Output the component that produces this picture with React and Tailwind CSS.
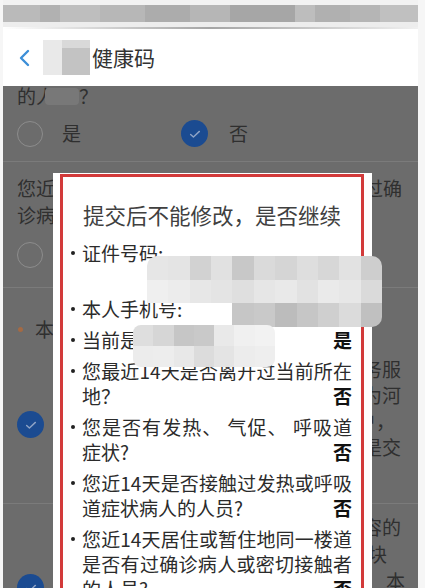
import React from "react";

// Pixelated strips that hide private data in the screenshot
const statusBlocks = [
  "w-[37px] bg-[#bababa]",
  "w-[20px] bg-[#b1b1b1]",
  "w-[40px] bg-[#bebebe]",
  "w-[45px] bg-[#b7b7b7]",
  "w-[45px] bg-[#acacac]",
  "w-[40px] bg-[#b6b6b6]",
  "w-[65px] bg-[#a6a6a6]",
  "w-[20px] bg-[#bdbdbd]",
  "w-[35px] bg-[#b0b0b0]",
  "w-[30px] bg-[#b5b5b5]",
  "w-[38px] bg-[#c0c0c0]",
];

const idBlur = [
  "bg-[#e6e6e6]", "bg-[#e4e4e4]", "bg-[#d2d2d2]", "bg-[#e1e1e1]", "bg-[#c8c8c8]", "bg-[#dadada]",
  "bg-[#d5d5d5]", "bg-[#dedede]", "bg-[#d7d7d7]", "bg-[#e2e2e2]", "bg-[#cecece]",
  "bg-[#efefef]", "bg-[#ececec]", "bg-[#e7e7e7]", "bg-[#e4e4e4]", "bg-[#dfdfdf]", "bg-[#e6e6e6]",
  "bg-[#e9e9e9]", "bg-[#e2e2e2]", "bg-[#eaeaea]", "bg-[#e7e7e7]", "bg-[#dadada]",
  "bg-transparent", "bg-transparent", "bg-transparent", "bg-transparent", "bg-[#c6c6c6]", "bg-[#c9c9c9]",
  "bg-[#bcbcbc]", "bg-[#c6c6c6]", "bg-[#cfcfcf]", "bg-[#dbdbdb]", "bg-[#c0c0c0]",
];

const placeBlur = [
  "bg-[#dedede]", "bg-[#d6d6d6]", "bg-[#c6c6c6]", "bg-[#c9c9c9]", "bg-[#e9e9e9]", "bg-[#f0f0f0]", "bg-[#f2f2f2]",
  "bg-[#ececec]", "bg-[#ededed]", "bg-[#e8e8e8]", "bg-[#dcdcdc]", "bg-[#e4e4e4]", "bg-[#ececec]", "bg-[#eeeeee]",
];

const items = [
  { lines: ["证件号码:", "\u00a0"] },
  { lines: ["本人手机号:"] },
  { lines: ["当前是"], answer: "是" },
  { lines: ["您最近14天是否离开过当前所在", "地？"], answer: "否" },
  { lines: ["您是否有发热、 气促、 呼吸道", "症状?"], answer: "否" },
  { lines: ["您近14天是否接触过发热或呼吸", "道症状病人的人员?"], answer: "否" },
  { lines: ["您近14天居住或暂住地同一楼道", "是否有过确诊病人或密切接触者", "的人员?"], answer: "否" },
];

const Radio = () => (
  <div className="w-[26px] h-[26px] shrink-0 rounded-full border-[1.5px] border-[#8d8d8d]" />
);

const Checked = () => (
  <div className="w-[27px] h-[27px] shrink-0 rounded-full bg-[#1b4b91] flex items-center justify-center">
    <svg className="w-[14px] h-[14px]" viewBox="0 0 16 16" fill="none">
      <path d="M3 8.5l3.2 3L13 5" stroke="#8ea3c6" strokeWidth="1.6" strokeLinecap="round" strokeLinejoin="round" />
    </svg>
  </div>
);

const Item = ({ lines, answer }) => (
  <div className="flex mt-[6px] first:mt-0">
    <div className="w-[12px] h-[25px] flex items-center">
      <div className="w-[4px] h-[4px] ml-[1px] rounded-full bg-[#222]" />
    </div>
    <div className="w-[270px] text-[19px] leading-[25px] text-[#2b2b2b]">
      {lines.map((line, i) =>
        i === lines.length - 1 ? (
          <div key={i} className="flex justify-between whitespace-nowrap">
            <span>{line}</span>
            {answer && <span className="font-bold text-[#111]">{answer}</span>}
          </div>
        ) : (
          <div
            key={i}
            className={line.length > 10 ? "whitespace-nowrap [text-align-last:justify]" : "whitespace-nowrap"}
          >
            {line}
          </div>
        )
      )}
    </div>
  </div>
);

export default function App() {
  return (
    <div className="relative w-[425px] h-[588px] overflow-hidden bg-[#f6f6f6] font-['Noto_Sans_CJK_SC','Noto_Sans',sans-serif]">
      <div className="ml-[3px] w-[415px] h-full flex flex-col">
        {/* Status bar (pixelated) */}
        <div className="h-[5px] shrink-0 bg-[#f2f2f2]" />
        <div className="h-[17px] shrink-0 flex">
          {statusBlocks.map((c, i) => (
            <div key={i} className={c} />
          ))}
        </div>
        <div className="h-[5px] shrink-0 bg-[#ededed]" />
        <div className="h-[2px] shrink-0 bg-gradient-to-r from-white via-[#a5a5a5] to-[#f0f0f0]" />

        {/* Header */}
        <div className="h-[57px] shrink-0 bg-white flex items-center">
          <svg className="ml-[14px] w-[16px] h-[18px]" viewBox="0 0 16 18" fill="none">
            <path d="M11 2L4 9l7 7" stroke="#3d8fd8" strokeWidth="2.4" strokeLinecap="round" strokeLinejoin="round" />
          </svg>
          <div className="ml-[10px] w-[47px] h-[35px] flex">
            <div className="w-[19px] bg-[#e9e9e9]" />
            <div className="w-[28px] flex flex-col">
              <div className="h-[8px] bg-[#d9d9d9]" />
              <div className="flex-1 bg-[#c3c3c3]" />
            </div>
          </div>
          <span className="ml-[2px] text-[21px] text-[#333]">健康码</span>
        </div>

        {/* Dimmed page behind the dialog */}
        <div className="flex-1 min-h-0 overflow-hidden bg-[#6c6c6c] text-[19px] text-[#2f2f2f]">
          <div className="h-[20px] pl-[14px] leading-[20px] flex items-center overflow-hidden">
            <span>的人</span>
            <span className="ml-[-10px] w-[34px] h-[17px] bg-[#787878] rounded-[4px]" />
            <span>？</span>
          </div>

          <div className="h-[56px] pl-[14px] flex items-center border-b border-[#7b7b7b]">
            <Radio />
            <span className="ml-[19px]">是</span>
            <div className="ml-[100px]">
              <Checked />
            </div>
            <span className="ml-[21px]">否</span>
          </div>

          <div className="h-[126px] pt-[12px] pl-[14px] pr-[16px] border-b border-[#7b7b7b]">
            <div className="flex justify-between leading-[27px] whitespace-nowrap">
              <span>您近14天内</span>
              <span>过确</span>
            </div>
            <div className="leading-[27px]">诊病人或疑似病人？</div>
            <div className="mt-[14px]">
              <Radio />
            </div>
          </div>

          <div className="h-[216px] pt-[28px] pl-[14px] pr-[17px] border-b border-[#7b7b7b]">
            <div className="flex items-center leading-[26px]">
              <span className="w-[5px] h-[5px] ml-[1px] rounded-full bg-[#a46a44]" />
              <span className="ml-[12px]">本人承诺</span>
            </div>
            <div className="mt-[14px] flex">
              <div className="mt-[55px]">
                <Checked />
              </div>
              <div className="flex-1 flex flex-col items-end leading-[26px]">
                <span>务服</span>
                <span>为河</span>
                <span className="pr-[6px]">户，</span>
                <span>是交</span>
              </div>
            </div>
          </div>

          <div className="pt-[9px] pl-[14px] pr-[13px] flex">
            <div className="mt-[61px]">
              <Checked />
            </div>
            <div className="flex-1 flex flex-col items-end leading-[27px]">
              <span className="pr-[4px]">容的</span>
              <span className="pr-[18px]">块</span>
              <span>本</span>
            </div>
          </div>
        </div>
      </div>

      {/* Confirm dialog */}
      <div className="absolute left-[53px] top-[173px] w-[319px] h-[420px] bg-white">
        <div className="ml-[7px] mt-[1px] w-[304px] h-full border-[3px] border-b-0 border-[#d23a3a] px-[7px]">
          <div className="pt-[23px] text-center text-[21.5px] leading-[30px] text-[#404040]">
            提交后不能修改，是否继续
          </div>
          <div className="mt-[10px]">
            {items.map((it, i) => (
              <Item key={i} lines={it.lines} answer={it.answer} />
            ))}
          </div>
        </div>
      </div>

      {/* Censor blocks */}
      <div className="absolute left-[147px] top-[256px] w-[235px] h-[71px] grid grid-cols-11 grid-rows-3 rounded-[10px] overflow-hidden">
        {idBlur.map((c, i) => (
          <div key={i} className={c} />
        ))}
      </div>
      <div className="absolute left-[133px] top-[325px] w-[142px] h-[42px] grid grid-cols-7 grid-rows-2 rounded-[8px] overflow-hidden">
        {placeBlur.map((c, i) => (
          <div key={i} className={c} />
        ))}
      </div>
    </div>
  );
}
